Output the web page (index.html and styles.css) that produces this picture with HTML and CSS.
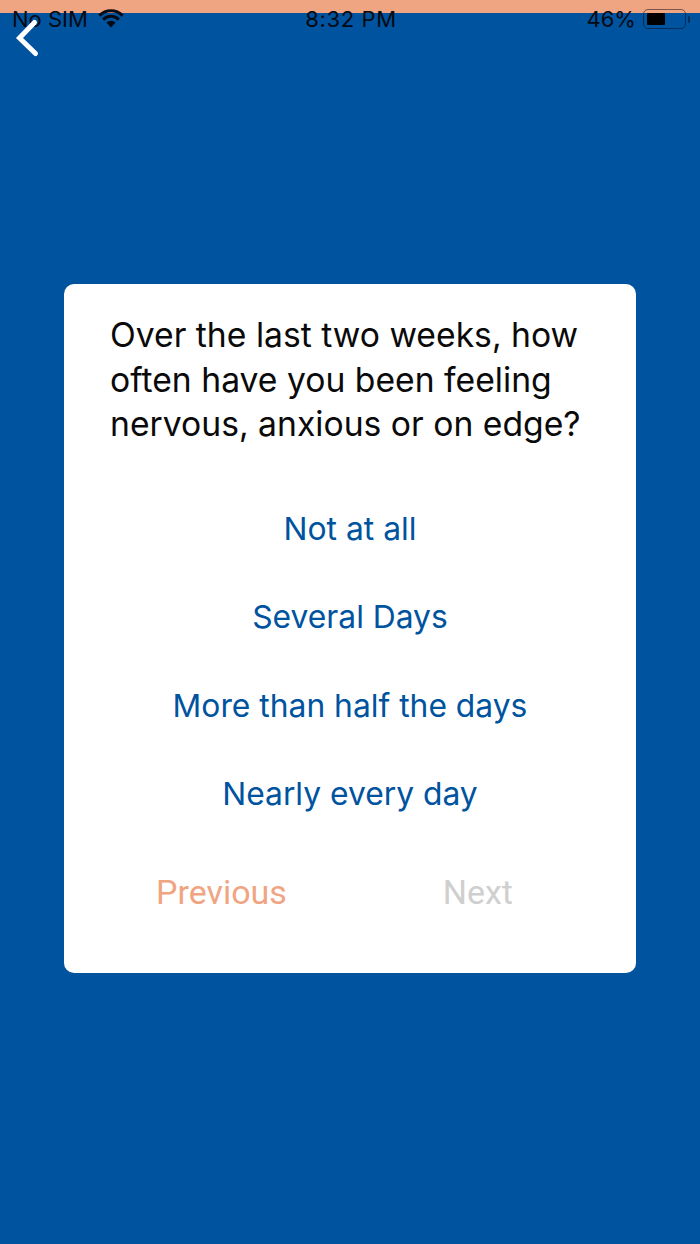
FILE: index.html
```html
<!DOCTYPE html>
<html lang="en">
<head>
  <meta charset="UTF-8">
  <title>Check-in Question</title>
  <link rel="stylesheet" href="styles.css">
</head>
<body>
  <div class="top-strip"></div>
  <!-- Status bar sits over the strip and the blue screen -->
  <div class="status-bar">
    <div class="status-left">
      <span>No SIM</span>
      <svg class="wifi-icon" width="26" height="19" viewBox="0 0 26 19">
        <path d="M13 18.5 L8.4 13.6 A6.4 6.4 0 0 1 17.6 13.6 Z" fill="#050a14"/>
        <path d="M5.2 10.6 A11 11 0 0 1 20.8 10.6" fill="none" stroke="#050a14" stroke-width="3"/>
        <path d="M1.4 6.6 A16.4 16.4 0 0 1 24.6 6.6" fill="none" stroke="#050a14" stroke-width="3"/>
      </svg>
    </div>
    <div class="status-time">8:32 PM</div>
    <div class="status-right">
      <span>46%</span>
      <div class="battery"><div class="battery-level"></div></div>
      <div class="battery-tip"></div>
    </div>
  </div>
  <svg class="back-icon" width="26" height="40" viewBox="0 0 26 40">
    <path d="M20.5 4.5 L5.5 20 L21.5 35.5" fill="none" stroke="#fff" stroke-width="5" stroke-linecap="round"/>
  </svg>

  <div class="screen">
    <div class="question-card">
      <div class="question-title">Over the last two weeks, how often have you been feeling nervous, anxious or on edge?</div>
      <div class="answers">
        <button class="answer-btn">Not at all</button>
        <button class="answer-btn">Several Days</button>
        <button class="answer-btn">More than half the days</button>
        <button class="answer-btn">Nearly every day</button>
      </div>
      <div class="card-nav">
        <button class="nav-btn previous">Previous</button>
        <button class="nav-btn next">Next</button>
      </div>
    </div>
  </div>
</body>
</html>
```

FILE: styles.css
```css
body {
  margin: 0;
  height: 1244px;
  overflow: hidden;
  background: #00539e;
  font-family: Inter, 'Noto Sans', sans-serif;
  color: #050a14;
}
button {
  display: block;
  border: none;
  background: none;
  padding: 0;
  font-family: Roboto, Inter, sans-serif;
  cursor: pointer;
}
.top-strip {
  height: 13px;
  background: #f0a582;
}
/* Overlays */
.status-bar {
  position: absolute;
  top: 6px;
  left: 12px;
  right: 10px;
  height: 26px;
  display: flex;
  justify-content: space-between;
  align-items: center;
  font-size: 22px;
  font-family: Inter, 'Liberation Sans', sans-serif;
  color: #050a14;
}
.status-left {
  display: flex;
  align-items: center;
  gap: 10px;
  width: 200px;
}
.wifi-icon {
  margin-top: -2px;
}
.status-time {
  letter-spacing: 0.6px;
}
.status-right {
  display: flex;
  align-items: center;
  justify-content: flex-end;
  width: 200px;
}
.battery {
  width: 43px;
  height: 20px;
  margin-left: 7px;
  padding: 3px;
  box-sizing: border-box;
  border: 1.5px solid rgba(5,10,20,0.5);
  border-radius: 5px;
}
.battery-level {
  width: 18px;
  height: 100%;
  background: #000;
  border-radius: 1px;
}
.battery-tip {
  width: 2px;
  height: 7px;
  margin-left: 2px;
  background: rgba(5,10,20,0.5);
  border-radius: 0 2px 2px 0;
}
.back-icon {
  position: absolute;
  top: 18px;
  left: 14px;
}
.screen {
  display: flex;
  justify-content: center;
  padding-top: 271px;
}
.question-card {
  width: 572px;
  height: 689px;
  box-sizing: border-box;
  padding: 29px 46px 0 46px;
  background: #fff;
  border-radius: 10px;
}
.question-title {
  font-size: 33.7px;
  line-height: 44.5px;
  font-weight: 400;
  color: #0a0a0a;
}
.answers {
  display: flex;
  flex-direction: column;
  align-items: center;
  gap: 44px;
  margin-top: 60px;
}
.answer-btn {
  font-family: Inter, sans-serif;
  font-size: 31.8px;
  line-height: 44.5px;
  color: #00539e;
}
.card-nav {
  display: flex;
  justify-content: space-between;
  margin-top: 53px;
  padding: 0 77px 0 46px;
}
.nav-btn {
  font-size: 34px;
  line-height: 44px;
}
.nav-btn.previous {
  color: #f0a582;
}
.nav-btn.next {
  color: #cfcfcf;
}
```
